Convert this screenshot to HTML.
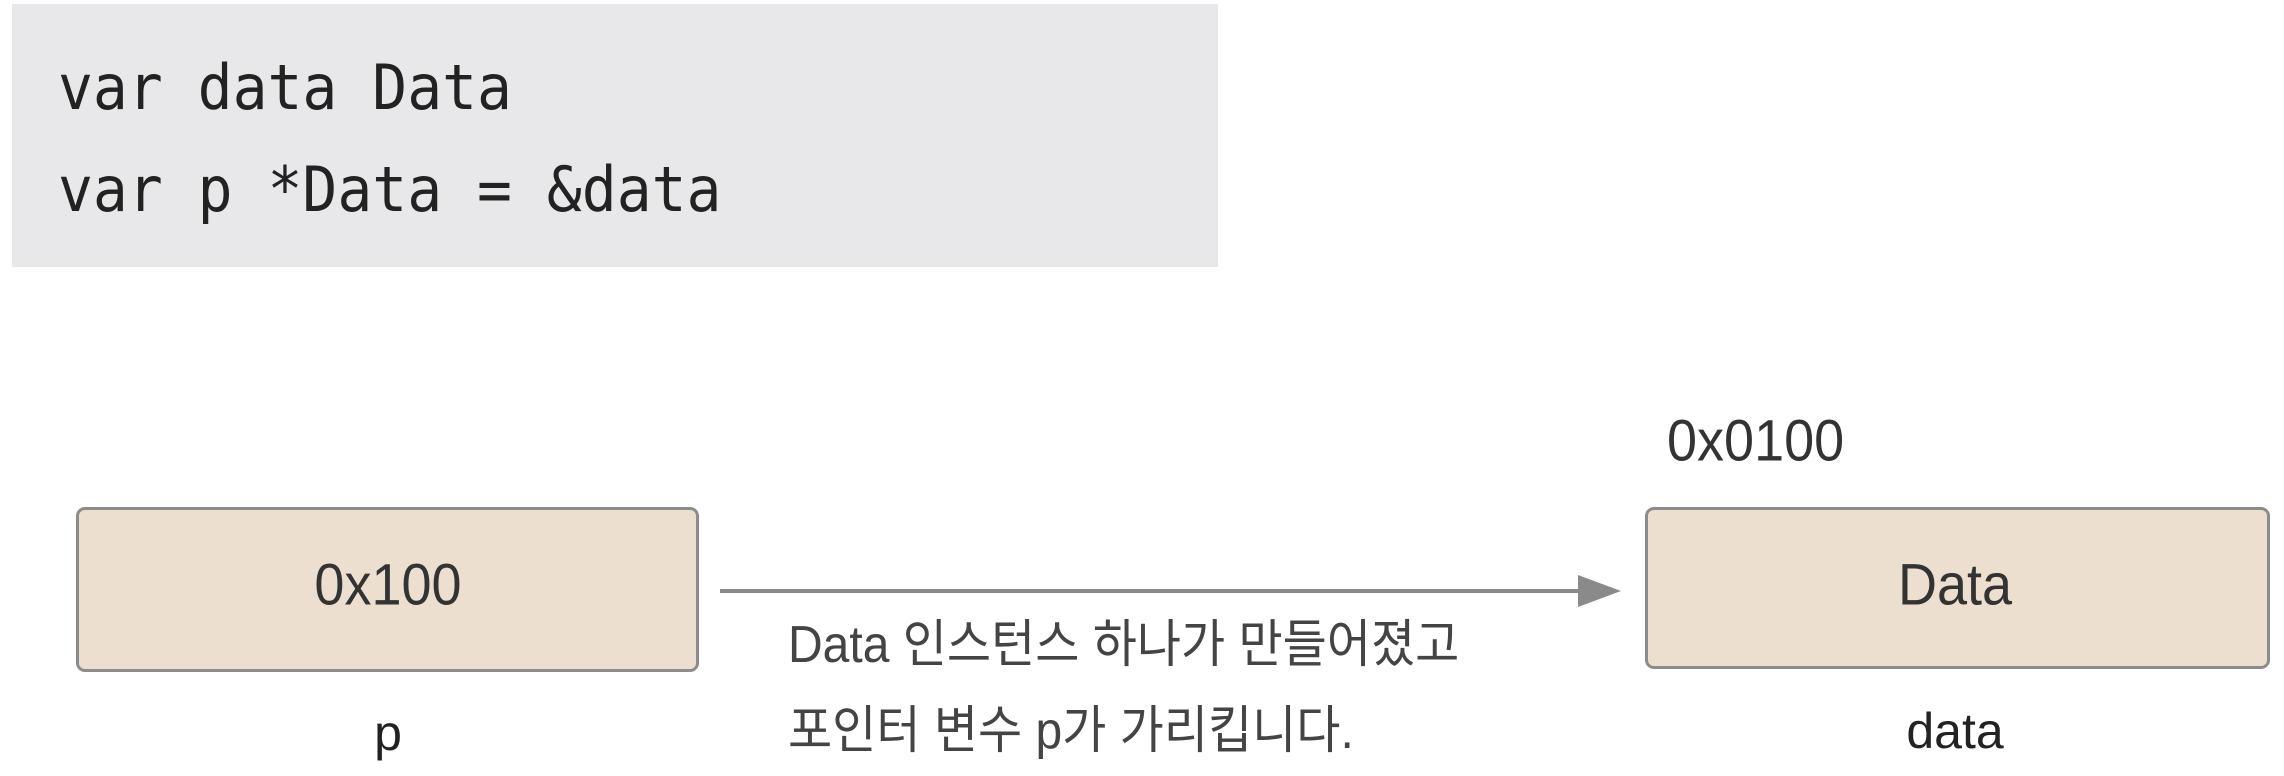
<!DOCTYPE html>
<html><head><meta charset="utf-8"><style>
body{margin:0;width:2284px;height:776px;background:#fff;position:relative;overflow:hidden;font-family:"Liberation Sans","Noto Sans CJK KR",sans-serif;color:#333}
.code{position:absolute;left:12px;top:4px;width:1206px;height:263px;background:#e8e8ea}
.cl{position:absolute;left:58px;font-family:"DejaVu Sans Mono","Liberation Mono",monospace;font-size:58px;color:#222;line-height:1;white-space:pre;transform-origin:left top;transform:scaleY(1.08)}
.box{position:absolute;background:#eddfd0;border:3px solid #8c8c8c;border-radius:9px;box-sizing:border-box}
.t{position:absolute;white-space:nowrap;line-height:1}
</style></head><body>
<div class="code"></div>
<div class="cl" style="top:56px">var data Data</div>
<div class="cl" style="top:158px">var p *Data = &amp;data</div>

<div class="box" style="left:76px;top:507px;width:623px;height:165px"></div>
<div class="t" style="left:388px;top:558px;font-size:54px;transform:translateX(-50%) scaleY(1.08)">0x100</div>
<div class="t" style="left:388px;top:708px;font-size:50px;transform:translateX(-50%);color:#222">p</div>

<svg style="position:absolute;left:0;top:0" width="2284" height="776">
<line x1="720" y1="591" x2="1590" y2="591" stroke="#8a8a8a" stroke-width="4"/>
<polygon points="1578,575 1621,591 1578,607" fill="#8a8a8a"/>
</svg>

<div class="t" style="left:788px;top:620px;font-size:48px;transform-origin:left top;transform:scaleY(1.08);color:#444">Data 인스턴스 하나가 만들어졌고</div>
<div class="t" style="left:788px;top:706px;font-size:48px;transform-origin:left top;transform:scaleY(1.08);color:#444">포인터 변수 p가 가리킵니다.</div>

<div class="t" style="left:1667px;top:412px;font-size:54px;transform-origin:left top;transform:scaleY(1.08)">0x0100</div>
<div class="box" style="left:1645px;top:507px;width:625px;height:162px"></div>
<div class="t" style="left:1955px;top:558px;font-size:54px;transform:translateX(-50%) scaleY(1.08)">Data</div>
<div class="t" style="left:1955px;top:706px;font-size:50px;transform:translateX(-50%);color:#222">data</div>
</body></html>
